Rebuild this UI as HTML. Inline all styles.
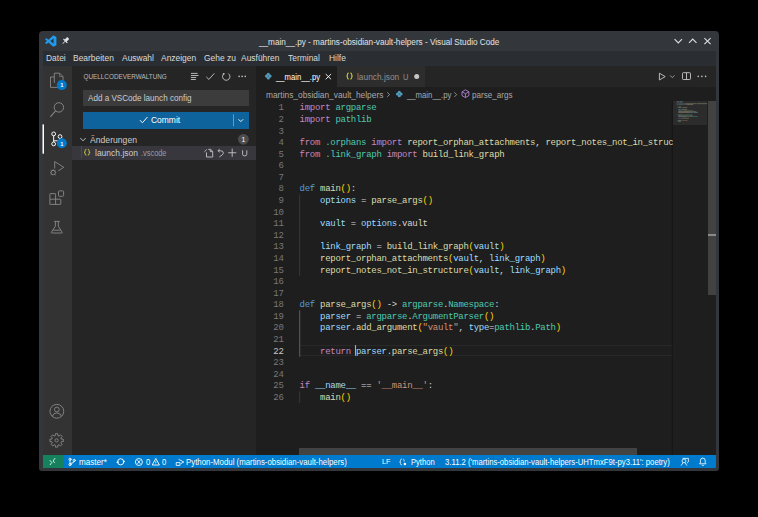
<!DOCTYPE html>
<html><head><meta charset="utf-8">
<style>
*{box-sizing:border-box;margin:0;padding:0}
html,body{width:758px;height:517px;background:#000;overflow:hidden;font-family:"Liberation Sans",sans-serif}
.a{position:absolute;white-space:pre}
.bx{position:absolute}
.mi{position:absolute;top:51px;height:14px;line-height:14px;font-size:8.45px;color:#dadada;white-space:pre}
.ln{position:absolute;left:262px;width:21.6px;text-align:right;color:#787878;font-family:"Liberation Mono",monospace;font-size:9px;letter-spacing:-0.28px;line-height:11.58px;height:11.58px;white-space:pre}
.ln.cur{color:#c6c6c6}
.cl{position:absolute;left:299.6px;color:#d4d4d4;font-family:"Liberation Mono",monospace;font-size:9px;letter-spacing:-0.28px;line-height:11.58px;height:11.58px;white-space:pre}
.k{color:#c586c0}.d{color:#569cd6}.t{color:#4ec9b0}.f{color:#dcdcaa}.v{color:#9cdcfe}.b{color:#ffd700}.s{color:#ce9178}.g{color:#d4d4d4}
.tx{position:absolute;white-space:pre;line-height:12px;height:12px;transform-origin:0 0}
.sb{position:absolute;top:456.1px;height:12.6px;line-height:12.6px;font-size:7.7px;color:#fff;white-space:pre}
</style></head><body>
<!-- window frame -->
<div class="bx" style="left:39px;top:31px;width:680px;height:439.5px;background:#33373c;border-radius:4px 4px 3px 3px"></div>
<!-- menu bar -->
<div class="bx" style="left:42.5px;top:50.5px;width:673.5px;height:15.2px;background:#2a2e32"></div>
<!-- activity bar -->
<div class="bx" style="left:42.5px;top:65.7px;width:29.3px;height:389.3px;background:#333333"></div>
<!-- sidebar -->
<div class="bx" style="left:71.8px;top:65.7px;width:184.4px;height:389.3px;background:#252526"></div>
<!-- tab bar -->
<div class="bx" style="left:256.2px;top:65.7px;width:459.8px;height:20.9px;background:#252526"></div>
<div class="bx" style="left:256.2px;top:65.7px;width:80.6px;height:20.9px;background:#1e1e1e"></div>
<div class="bx" style="left:336.8px;top:65.7px;width:88px;height:20.9px;background:#2d2d2d"></div>
<!-- editor -->
<div class="bx" style="left:256.2px;top:86.6px;width:459.8px;height:368.4px;background:#1e1e1e"></div>
<!-- status bar -->
<div class="bx" style="left:42.5px;top:455px;width:673.5px;height:12.6px;background:#007acc"></div>
<div class="bx" style="left:42.5px;top:455px;width:20.5px;height:12.6px;background:#16825d"></div>

<!-- sidebar widgets -->
<div class="bx" style="left:83px;top:90.3px;width:166px;height:15.3px;background:#3c3c3c"></div>
<div class="bx" style="left:83px;top:112px;width:166px;height:16.6px;background:#0e639c"></div>
<div class="bx" style="left:71.8px;top:146px;width:184.4px;height:13.6px;background:#37373d"></div>

<!-- current line highlight -->
<div class="bx" style="left:299.5px;top:344.8px;width:373px;height:11.2px;border-top:1px solid #282828;border-bottom:1px solid #282828"></div>

<!-- minimap slider & scrollbars -->
<div class="bx" style="left:672.8px;top:100.8px;width:34.7px;height:24.3px;background:#2c2c2c"></div>
<div class="bx" style="left:707.6px;top:100.8px;width:8.4px;height:194.3px;background:#424242"></div>
<div class="bx" style="left:707.6px;top:234.3px;width:8.4px;height:1.6px;background:#8a8a8a"></div>
<div class="bx" style="left:670.5px;top:100.8px;width:2.5px;height:354.2px;background:linear-gradient(to right,rgba(0,0,0,0),rgba(0,0,0,.35))"></div>
<div class="bx" style="left:299px;top:447.9px;width:337.6px;height:7.1px;background:#434343"></div>

<svg class="a" style="left:0;top:0" width="758" height="517" viewBox="0 0 758 517"><g opacity="0.42"><rect x="676.70" y="101.00" width="2.46" height="0.7" fill="#c586c0"/><rect x="679.57" y="101.00" width="3.28" height="0.7" fill="#4ec9b0"/><rect x="676.70" y="101.80" width="2.46" height="0.7" fill="#c586c0"/><rect x="679.57" y="101.80" width="2.87" height="0.7" fill="#4ec9b0"/><rect x="676.70" y="103.40" width="1.64" height="0.7" fill="#c586c0"/><rect x="678.75" y="103.40" width="3.28" height="0.7" fill="#4ec9b0"/><rect x="682.44" y="103.40" width="2.46" height="0.7" fill="#c586c0"/><rect x="685.31" y="103.40" width="10.25" height="0.7" fill="#dcdcaa"/><rect x="695.56" y="103.40" width="0.41" height="0.7" fill="#d4d4d4"/><rect x="696.38" y="103.40" width="10.92" height="0.7" fill="#dcdcaa"/><rect x="676.70" y="104.20" width="1.64" height="0.7" fill="#c586c0"/><rect x="678.75" y="104.20" width="4.51" height="0.7" fill="#4ec9b0"/><rect x="683.67" y="104.20" width="2.46" height="0.7" fill="#c586c0"/><rect x="686.54" y="104.20" width="6.56" height="0.7" fill="#dcdcaa"/><rect x="676.70" y="106.60" width="1.23" height="0.7" fill="#569cd6"/><rect x="678.34" y="106.60" width="1.64" height="0.7" fill="#dcdcaa"/><rect x="679.98" y="106.60" width="0.82" height="0.7" fill="#ffd700"/><rect x="680.80" y="106.60" width="0.41" height="0.7" fill="#d4d4d4"/><rect x="678.34" y="107.40" width="2.87" height="0.7" fill="#9cdcfe"/><rect x="681.62" y="107.40" width="0.41" height="0.7" fill="#d4d4d4"/><rect x="682.44" y="107.40" width="4.10" height="0.7" fill="#dcdcaa"/><rect x="686.54" y="107.40" width="0.82" height="0.7" fill="#ffd700"/><rect x="678.34" y="109.00" width="2.05" height="0.7" fill="#9cdcfe"/><rect x="680.80" y="109.00" width="0.41" height="0.7" fill="#d4d4d4"/><rect x="681.62" y="109.00" width="2.87" height="0.7" fill="#9cdcfe"/><rect x="684.49" y="109.00" width="0.41" height="0.7" fill="#d4d4d4"/><rect x="684.90" y="109.00" width="2.05" height="0.7" fill="#d4d4d4"/><rect x="678.34" y="110.60" width="4.10" height="0.7" fill="#9cdcfe"/><rect x="682.85" y="110.60" width="0.41" height="0.7" fill="#d4d4d4"/><rect x="683.67" y="110.60" width="6.56" height="0.7" fill="#dcdcaa"/><rect x="690.23" y="110.60" width="0.41" height="0.7" fill="#ffd700"/><rect x="690.64" y="110.60" width="2.05" height="0.7" fill="#9cdcfe"/><rect x="692.69" y="110.60" width="0.41" height="0.7" fill="#ffd700"/><rect x="678.34" y="111.40" width="10.25" height="0.7" fill="#dcdcaa"/><rect x="688.59" y="111.40" width="0.41" height="0.7" fill="#ffd700"/><rect x="689.00" y="111.40" width="2.05" height="0.7" fill="#9cdcfe"/><rect x="691.05" y="111.40" width="0.41" height="0.7" fill="#d4d4d4"/><rect x="691.87" y="111.40" width="4.10" height="0.7" fill="#9cdcfe"/><rect x="695.97" y="111.40" width="0.41" height="0.7" fill="#ffd700"/><rect x="678.34" y="112.20" width="11.89" height="0.7" fill="#dcdcaa"/><rect x="690.23" y="112.20" width="0.41" height="0.7" fill="#ffd700"/><rect x="690.64" y="112.20" width="2.05" height="0.7" fill="#9cdcfe"/><rect x="692.69" y="112.20" width="0.41" height="0.7" fill="#d4d4d4"/><rect x="693.51" y="112.20" width="4.10" height="0.7" fill="#9cdcfe"/><rect x="697.61" y="112.20" width="0.41" height="0.7" fill="#ffd700"/><rect x="676.70" y="114.60" width="1.23" height="0.7" fill="#569cd6"/><rect x="678.34" y="114.60" width="4.10" height="0.7" fill="#dcdcaa"/><rect x="682.44" y="114.60" width="0.82" height="0.7" fill="#ffd700"/><rect x="683.67" y="114.60" width="0.82" height="0.7" fill="#d4d4d4"/><rect x="684.90" y="114.60" width="3.28" height="0.7" fill="#4ec9b0"/><rect x="688.18" y="114.60" width="0.41" height="0.7" fill="#d4d4d4"/><rect x="688.59" y="114.60" width="3.69" height="0.7" fill="#4ec9b0"/><rect x="692.28" y="114.60" width="0.41" height="0.7" fill="#d4d4d4"/><rect x="678.34" y="115.40" width="2.46" height="0.7" fill="#9cdcfe"/><rect x="681.21" y="115.40" width="0.41" height="0.7" fill="#d4d4d4"/><rect x="682.03" y="115.40" width="3.28" height="0.7" fill="#4ec9b0"/><rect x="685.31" y="115.40" width="0.41" height="0.7" fill="#d4d4d4"/><rect x="685.72" y="115.40" width="5.74" height="0.7" fill="#4ec9b0"/><rect x="691.46" y="115.40" width="0.82" height="0.7" fill="#ffd700"/><rect x="678.34" y="116.20" width="2.46" height="0.7" fill="#9cdcfe"/><rect x="680.80" y="116.20" width="0.41" height="0.7" fill="#d4d4d4"/><rect x="681.21" y="116.20" width="4.92" height="0.7" fill="#dcdcaa"/><rect x="686.13" y="116.20" width="0.41" height="0.7" fill="#ffd700"/><rect x="686.54" y="116.20" width="2.87" height="0.7" fill="#ce9178"/><rect x="689.41" y="116.20" width="0.41" height="0.7" fill="#d4d4d4"/><rect x="690.23" y="116.20" width="1.64" height="0.7" fill="#9cdcfe"/><rect x="691.87" y="116.20" width="0.41" height="0.7" fill="#d4d4d4"/><rect x="692.28" y="116.20" width="2.87" height="0.7" fill="#4ec9b0"/><rect x="695.15" y="116.20" width="0.41" height="0.7" fill="#d4d4d4"/><rect x="695.56" y="116.20" width="1.64" height="0.7" fill="#4ec9b0"/><rect x="697.20" y="116.20" width="0.41" height="0.7" fill="#ffd700"/><rect x="678.34" y="117.80" width="2.46" height="0.7" fill="#c586c0"/><rect x="681.21" y="117.80" width="2.46" height="0.7" fill="#9cdcfe"/><rect x="683.67" y="117.80" width="0.41" height="0.7" fill="#d4d4d4"/><rect x="684.08" y="117.80" width="4.10" height="0.7" fill="#dcdcaa"/><rect x="688.18" y="117.80" width="0.82" height="0.7" fill="#ffd700"/><rect x="676.70" y="120.20" width="0.82" height="0.7" fill="#c586c0"/><rect x="677.93" y="120.20" width="3.28" height="0.7" fill="#9cdcfe"/><rect x="681.62" y="120.20" width="0.82" height="0.7" fill="#d4d4d4"/><rect x="682.85" y="120.20" width="4.10" height="0.7" fill="#ce9178"/><rect x="686.95" y="120.20" width="0.41" height="0.7" fill="#d4d4d4"/><rect x="678.34" y="121.00" width="1.64" height="0.7" fill="#dcdcaa"/><rect x="679.98" y="121.00" width="0.82" height="0.7" fill="#ffd700"/></g></svg>

<div class="bx" style="left:0;top:0;width:672.5px;height:517px;overflow:hidden">
<div class="ln" style="top:103.40px">1</div>
<div class="cl" style="top:103.40px"><span class="k">import</span> <span class="t">argparse</span></div>
<div class="ln" style="top:114.98px">2</div>
<div class="cl" style="top:114.98px"><span class="k">import</span> <span class="t">pathlib</span></div>
<div class="ln" style="top:126.56px">3</div>
<div class="ln" style="top:138.14px">4</div>
<div class="cl" style="top:138.14px"><span class="k">from</span> <span class="t">.orphans</span> <span class="k">import</span> <span class="f">report_orphan_attachments</span>, <span class="f">report_notes_not_in_structure</span></div>
<div class="ln" style="top:149.72px">5</div>
<div class="cl" style="top:149.72px"><span class="k">from</span> <span class="t">.link_graph</span> <span class="k">import</span> <span class="f">build_link_graph</span></div>
<div class="ln" style="top:161.30px">6</div>
<div class="ln" style="top:172.88px">7</div>
<div class="ln" style="top:184.46px">8</div>
<div class="cl" style="top:184.46px"><span class="d">def</span> <span class="f">main</span><span class="b">()</span>:</div>
<div class="ln" style="top:196.04px">9</div>
<div class="cl" style="top:196.04px">    <span class="v">options</span> = <span class="f">parse_args</span><span class="b">()</span></div>
<div class="ln" style="top:207.62px">10</div>
<div class="ln" style="top:219.20px">11</div>
<div class="cl" style="top:219.20px">    <span class="v">vault</span> = <span class="v">options</span>.<span class="g">vault</span></div>
<div class="ln" style="top:230.78px">12</div>
<div class="ln" style="top:242.36px">13</div>
<div class="cl" style="top:242.36px">    <span class="v">link_graph</span> = <span class="f">build_link_graph</span><span class="b">(</span><span class="v">vault</span><span class="b">)</span></div>
<div class="ln" style="top:253.94px">14</div>
<div class="cl" style="top:253.94px">    <span class="f">report_orphan_attachments</span><span class="b">(</span><span class="v">vault</span>, <span class="v">link_graph</span><span class="b">)</span></div>
<div class="ln" style="top:265.52px">15</div>
<div class="cl" style="top:265.52px">    <span class="f">report_notes_not_in_structure</span><span class="b">(</span><span class="v">vault</span>, <span class="v">link_graph</span><span class="b">)</span></div>
<div class="ln" style="top:277.10px">16</div>
<div class="ln" style="top:288.68px">17</div>
<div class="ln" style="top:300.26px">18</div>
<div class="cl" style="top:300.26px"><span class="d">def</span> <span class="f">parse_args</span><span class="b">()</span> -&gt; <span class="t">argparse</span>.<span class="t">Namespace</span>:</div>
<div class="ln" style="top:311.84px">19</div>
<div class="cl" style="top:311.84px">    <span class="v">parser</span> = <span class="t">argparse</span>.<span class="t">ArgumentParser</span><span class="b">()</span></div>
<div class="ln" style="top:323.42px">20</div>
<div class="cl" style="top:323.42px">    <span class="v">parser</span>.<span class="f">add_argument</span><span class="b">(</span><span class="s">"vault"</span>, <span class="v">type</span>=<span class="t">pathlib</span>.<span class="t">Path</span><span class="b">)</span></div>
<div class="ln" style="top:335.00px">21</div>
<div class="ln cur" style="top:346.58px">22</div>
<div class="cl" style="top:346.58px">    <span class="k">return</span> <span class="v">parser</span>.<span class="f">parse_args</span><span class="b">()</span></div>
<div class="ln" style="top:358.16px">23</div>
<div class="ln" style="top:369.74px">24</div>
<div class="ln" style="top:381.32px">25</div>
<div class="cl" style="top:381.32px"><span class="k">if</span> <span class="v">__name__</span> == <span class="s">'__main__'</span>:</div>
<div class="ln" style="top:392.90px">26</div>
<div class="cl" style="top:392.90px">    <span class="f">main</span><span class="b">()</span></div>
</div>

<!-- title -->

<!-- menu -->

<!-- sidebar texts -->

<!-- tabs texts -->

<!-- breadcrumbs -->

<!-- status bar texts -->

<div class="tx" style="left:258.6px;top:36.29px;font-size:8.69px;color:#e3e3e3;transform:scaleX(0.9434)">__main__.py - martins-obsidian-vault-helpers - Visual Studio Code</div>
<div class="tx" style="left:46.2px;top:51.65px;font-size:9.46px;color:#dadada;transform:scaleX(0.8929)">Datei</div>
<div class="tx" style="left:73.3px;top:51.65px;font-size:9.46px;color:#dadada;transform:scaleX(0.8929)">Bearbeiten</div>
<div class="tx" style="left:121.6px;top:51.65px;font-size:9.46px;color:#dadada;transform:scaleX(0.8929)">Auswahl</div>
<div class="tx" style="left:161px;top:51.65px;font-size:9.46px;color:#dadada;transform:scaleX(0.8929)">Anzeigen</div>
<div class="tx" style="left:203.6px;top:51.65px;font-size:9.46px;color:#dadada;transform:scaleX(0.8929)">Gehe zu</div>
<div class="tx" style="left:241px;top:51.65px;font-size:9.46px;color:#dadada;transform:scaleX(0.8929)">Ausführen</div>
<div class="tx" style="left:288px;top:51.65px;font-size:9.46px;color:#dadada;transform:scaleX(0.8929)">Terminal</div>
<div class="tx" style="left:328.6px;top:51.65px;font-size:9.46px;color:#dadada;transform:scaleX(0.8929)">Hilfe</div>
<div class="tx" style="left:83.5px;top:71.20px;font-size:6.36px;color:#bbbbbb;transform:scaleX(1.0000)">QUELLCODEVERWALTUNG</div>
<div class="tx" style="left:87.6px;top:91.56px;font-size:9.07px;color:#cccccc;transform:scaleX(0.8929)">Add a VSCode launch config</div>
<div class="tx" style="left:150.7px;top:113.82px;font-size:9.48px;color:#ffffff;transform:scaleX(0.8929)">Commit</div>
<div class="tx" style="left:89.9px;top:133.95px;font-size:9.67px;color:#cccccc;transform:scaleX(0.8929)">Änderungen</div>
<div class="tx" style="left:94.5px;top:147.30px;font-size:9.52px;color:#cccccc;transform:scaleX(0.8929)">launch.json</div>
<div class="tx" style="left:141.3px;top:146.79px;font-size:8.29px;color:#9d9d9d;transform:scaleX(0.8929)">.vscode</div>
<div class="tx" style="left:276px;top:70.91px;font-size:8.62px;color:#ffffff;transform:scaleX(0.8929)">__main__.py</div>
<div class="tx" style="left:357.1px;top:70.66px;font-size:9.35px;color:#8f8f8f;transform:scaleX(0.8929)">launch.json</div>
<div class="tx" style="left:402.6px;top:70.99px;font-size:8.40px;color:#8f8f8f;transform:scaleX(0.8929)">U</div>
<div class="tx" style="left:266px;top:88.66px;font-size:9.35px;color:#a9a9a9;transform:scaleX(0.8929)">martins_obsidian_vault_helpers</div>
<div class="tx" style="left:407.0px;top:88.89px;font-size:8.68px;color:#a9a9a9;transform:scaleX(0.8929)">__main__.py</div>
<div class="tx" style="left:472.3px;top:88.76px;font-size:9.07px;color:#a9a9a9;transform:scaleX(0.8929)">parse_args</div>
<div class="tx" style="left:79px;top:455.96px;font-size:9.07px;color:#ffffff;transform:scaleX(0.8929)">master*</div>
<div class="tx" style="left:145.6px;top:456.11px;font-size:8.62px;color:#ffffff;transform:scaleX(0.8929)">0</div>
<div class="tx" style="left:162px;top:456.11px;font-size:8.62px;color:#ffffff;transform:scaleX(0.8929)">0</div>
<div class="tx" style="left:186.3px;top:456.05px;font-size:8.79px;color:#ffffff;transform:scaleX(0.8929)">Python-Modul (martins-obsidian-vault-helpers)</div>
<div class="tx" style="left:382.2px;top:456.34px;font-size:7.95px;color:#ffffff;transform:scaleX(0.8929)">LF</div>
<div class="tx" style="left:411px;top:456.15px;font-size:8.51px;color:#ffffff;transform:scaleX(0.8929)">Python</div>
<div class="tx" style="left:444.7px;top:456.10px;font-size:8.65px;color:#ffffff;transform:scaleX(0.8929)">3.11.2 (&#x27;martins-obsidian-vault-helpers-UHTmxF9t-py3.11&#x27;: poetry)</div>
<!-- icons -->
<svg class="a" style="left:0;top:0" width="758" height="517" viewBox="0 0 758 517" fill="none">

<!-- vscode logo -->
<g transform="translate(45.2,35.5) scale(0.112)"><path fill="#1f9cf0" fill-rule="evenodd" d="M96.46 10.8L75.86.87C73.48-.28 70.62.2 68.75 2.07L29.3 38.04 12.12 25c-1.6-1.21-3.84-1.11-5.32.24L1.29 30.25c-1.81 1.65-1.81 4.51 0 6.16L16.19 50 1.29 63.59c-1.81 1.65-1.81 4.51 0 6.16l5.51 5.01c1.48 1.35 3.72 1.45 5.32.24l17.18-13.04 39.45 35.97c1.87 1.87 4.73 2.35 7.11 1.2l20.6-9.93A6.25 6.25 0 00100 83.57V16.43a6.25 6.25 0 00-3.54-5.63zM75.02 27.3L45.11 50l29.91 22.7V27.3z"/></g>
<!-- pin -->
<g transform="translate(65.5,40.8) rotate(45)" fill="#e6e6e6"><rect x="-1.4" y="-3.8" width="2.8" height="3.6"/><rect x="-2.7" y="-0.4" width="5.4" height="1.1"/><rect x="-0.35" y="0.6" width="0.7" height="3.4"/></g>
<!-- window controls -->
<polyline points="674.6,39.2 678.3,43 682,39.2" stroke="#dedede" stroke-width="1.1"/>
<polyline points="689,42.9 692.75,39.1 696.5,42.9" stroke="#dedede" stroke-width="1.1"/>
<path d="M704.4,38.2 L710.6,44.1 M710.6,38.2 L704.4,44.1" stroke="#dedede" stroke-width="1.1"/>

<!-- activity: explorer -->
<g stroke="#858585" stroke-width="0.95">
<path d="M54.3,77 H50.5 V87.4 H58"/>
<path d="M54.3,83 V73.2 H59.6 L63,76.6 V80"/>
<path d="M59.6,73.2 V76.6 H63" stroke-width="0.7"/>
</g>
<circle cx="61.8" cy="85.1" r="5" fill="#007acc"/><text x="61.8" y="87.4" text-anchor="middle" font-family="Liberation Sans" font-weight="bold" font-size="5.8" fill="#fff">1</text>
<!-- search -->
<circle cx="58.9" cy="107.4" r="4.7" stroke="#858585" stroke-width="1"/>
<path d="M55.6,110.8 L50.3,116.8" stroke="#858585" stroke-width="1.1"/>
<!-- scm active -->
<rect x="42.5" y="124.4" width="1.5" height="29.3" fill="#ffffff"/>
<g stroke="#ffffff" stroke-width="0.95">
<circle cx="53.66" cy="133.9" r="1.9"/><circle cx="60.04" cy="136.6" r="1.9"/><circle cx="53.66" cy="143.9" r="1.9"/>
<path d="M53.66,135.8 V142 M53.66,140.8 H57.6 Q60.04,140.8 60.04,138.5"/>
</g>
<circle cx="61.8" cy="143.2" r="5" fill="#007acc"/><text x="61.8" y="145.5" text-anchor="middle" font-family="Liberation Sans" font-weight="bold" font-size="5.8" fill="#fff">1</text>
<!-- run debug -->
<g stroke="#858585" stroke-width="0.95">
<path d="M54.7,168.5 V161.6 L63.8,167.3 L58.3,170.8"/>
<circle cx="53.2" cy="172.6" r="2.2"/>
<path d="M50.2,172.6 H51 M55.4,172.6 H56.2 M50.8,170.2 L51.6,170.9 M55.6,170.2 L54.8,170.9 M50.8,175 L51.6,174.3 M55.6,175 L54.8,174.3 M51.8,170.6 Q53.2,169.2 54.6,170.6"/>
</g>
<!-- extensions -->
<g stroke="#858585" stroke-width="0.95">
<rect x="58.5" y="190.9" width="5.1" height="5.4" rx="0.8"/>
<path d="M49.9,204.4 V194.1 Q49.9,193.6 50.4,193.6 H55.1 Q55.6,193.6 55.6,194.1 V204.4 M49.9,199.2 H60.3 Q60.8,199.2 60.8,199.7 V203.9 Q60.8,204.4 60.3,204.4 H50.4 Q49.9,204.4 49.9,203.9"/>
</g>
<!-- testing flask -->
<g stroke="#858585" stroke-width="0.95" stroke-linejoin="round">
<path d="M54.1,221.4 H59.8 M55.4,221.4 V226.2 L51.3,232.4 Q51.1,233 51.8,233 H61.8 Q62.5,233 62.2,232.4 L58.3,226.2 V221.4 M53.1,230.2 H60.5"/>
</g>
<!-- account -->
<g stroke="#858585" stroke-width="0.95">
<circle cx="56.85" cy="411.3" r="6.9"/>
<circle cx="56.85" cy="409.5" r="2.4"/>
<path d="M52.3,416.3 Q53,413 56.85,412.9 Q60.7,413 61.4,416.3"/>
</g>
<!-- settings -->
<g stroke="#858585" stroke-width="0.95" stroke-linejoin="round">
<path d="M55.31,435.67 L55.43,433.70 L57.77,433.70 L57.89,435.67 L59.03,436.14 L60.51,434.84 L62.16,436.49 L60.86,437.97 L61.33,439.11 L63.30,439.23 L63.30,441.57 L61.33,441.69 L60.86,442.83 L62.16,444.31 L60.51,445.96 L59.03,444.66 L57.89,445.13 L57.77,447.10 L55.43,447.10 L55.31,445.13 L54.17,444.66 L52.69,445.96 L51.04,444.31 L52.34,442.83 L51.87,441.69 L49.90,441.57 L49.90,439.23 L51.87,439.11 L52.34,437.97 L51.04,436.49 L52.69,434.84 L54.17,436.14 Z"/>
<circle cx="56.6" cy="440.4" r="1.6"/>
</g>

<!-- sidebar header icons -->
<g stroke="#c5c5c5" stroke-width="0.9">
<path d="M190.9,73.4 H197.6 M190.9,75.5 H198.5 M190.9,77.5 H196.2 M190.9,79.5 H195.8"/>
<polyline points="206.3,76.9 208.9,79.4 214.3,73.4"/>
<path d="M223.9,73.7 A3.7,3.7 0 1 0 228.3,73.5"/>
</g>
<circle cx="223.7" cy="73.8" r="0.9" fill="#c5c5c5"/>
<g fill="#c5c5c5"><circle cx="239.1" cy="76.4" r="0.78"/><circle cx="242.15" cy="76.4" r="0.78"/><circle cx="245.2" cy="76.4" r="0.78"/></g>

<!-- commit button -->
<polyline points="140,120.2 142.4,122.8 147.4,117" stroke="#ffffff" stroke-width="0.95"/>
<path d="M233.5,114.4 V126.3" stroke="rgba(255,255,255,0.45)" stroke-width="0.8"/>
<polyline points="238.5,119.3 240.8,121.6 243.1,119.3" stroke="#ffffff" stroke-width="0.9"/>

<!-- Änderungen chevron + badge -->
<polyline points="80.3,138 83,140.9 85.7,138" stroke="#c5c5c5" stroke-width="0.9"/>
<circle cx="243.4" cy="139.3" r="5.4" fill="#4d4d4d"/><text x="243.4" y="141.7" text-anchor="middle" font-family="Liberation Sans" font-size="6.8" fill="#fff">1</text>


<!-- launch.json row -->
<path d="M81.4,146 V158.7" stroke="#585858" stroke-width="0.6"/>
<g stroke="#c5c5c5" stroke-width="0.9" stroke-linejoin="round">
<path d="M208.3,149.4 H210.6 L212.7,151.4 V157 H206.5 V152.4 M204.4,151.8 L206.8,149.5 M210.3,149.6 V151.6 H212.5" />
<path d="M217.9,150.7 L219.6,149.2 M217.9,150.7 L219.8,152.2 M218.2,150.7 H220.6 Q223.6,150.9 223.4,153.2 Q223.2,154.6 219.4,156.9"/>
<path d="M232.2,148.6 V156.9 M228.2,152.75 H236.3"/>
<path d="M242.6,150.3 V154.3 Q242.6,155.9 244.7,155.9 Q246.8,155.9 246.8,154.3 V150.3"/>
</g>

<!-- tab icons -->
<g fill="#519aba"><circle cx="268.3" cy="74.3" r="1.55"/><circle cx="270.1" cy="76.1" r="1.55"/><circle cx="268.3" cy="77.9" r="1.55"/><circle cx="266.5" cy="76.1" r="1.55"/></g>
<path d="M325.7,74 L331.1,79.3 M331.1,74 L325.7,79.3" stroke="#ffffff" stroke-width="0.9"/>
<g id="br" stroke="#c8c83e" stroke-width="1.05" fill="none">
<path d="M348.8,72.9 Q347.4,72.9 347.4,74.2 V75.2 Q347.4,76 346.3,76 Q347.4,76 347.4,76.8 V77.8 Q347.4,79.1 348.8,79.1 M350.3,72.9 Q351.7,72.9 351.7,74.2 V75.2 Q351.7,76 352.8,76 Q351.7,76 351.7,76.8 V77.8 Q351.7,79.1 350.3,79.1"/>
</g>
<g transform="translate(83.9,149.2) scale(0.93) translate(-346.1,-72.7)" stroke="#c8c83e" stroke-width="1.05" fill="none">
<path d="M348.8,72.9 Q347.4,72.9 347.4,74.2 V75.2 Q347.4,76 346.3,76 Q347.4,76 347.4,76.8 V77.8 Q347.4,79.1 348.8,79.1 M350.3,72.9 Q351.7,72.9 351.7,74.2 V75.2 Q351.7,76 352.8,76 Q351.7,76 351.7,76.8 V77.8 Q351.7,79.1 350.3,79.1"/>
</g>
<circle cx="416.7" cy="76.5" r="2.5" fill="#c5c5c5"/>
<!-- editor actions -->
<g stroke="#c5c5c5" stroke-width="0.9" stroke-linejoin="round">
<path d="M659.4,73.2 V80 L665.2,76.6 Z"/>
<polyline points="670.1,75.4 672.3,77.6 674.5,75.4" stroke-width="0.7"/>
<rect x="682.5" y="72.7" width="8" height="6.8" rx="0.8"/>
<path d="M686.5,72.7 V79.5"/>
</g>
<g fill="#c5c5c5"><circle cx="698.2" cy="76.4" r="0.78"/><circle cx="701.9" cy="76.4" r="0.78"/><circle cx="705.6" cy="76.4" r="0.78"/></g>

<!-- breadcrumbs icons -->
<g stroke="#a9a9a9" stroke-width="0.8"><polyline points="387.2,92.3 389.5,94.6 387.2,96.9"/><polyline points="454.4,92.3 456.7,94.6 454.4,96.9"/></g>
<g fill="#519aba"><circle cx="399.3" cy="92.2" r="1.55"/><circle cx="401.1" cy="94" r="1.55"/><circle cx="399.3" cy="95.8" r="1.55"/><circle cx="397.5" cy="94" r="1.55"/></g>
<g stroke="#b180d7" stroke-width="0.9" stroke-linejoin="round">
<path d="M465.45,89.8 L468.9,91.8 V95.6 L465.45,97.6 L462,95.6 V91.8 Z M462,91.8 L465.45,93.7 L468.9,91.8 M465.45,93.7 V97.6"/>
</g>

<!-- indent guides -->
<path d="M299.7,194.54 V275.60" stroke="#404040" stroke-width="0.8"/>
<path d="M299.7,310.34 V356.66" stroke="#707070" stroke-width="0.8"/>
<path d="M299.7,391.40 V402.98" stroke="#404040" stroke-width="0.8"/>
<!-- cursor -->
<rect x="354.95" y="345.1" width="1.1" height="10.7" fill="#aeafad"/>

<!-- status bar icons -->
<g stroke="#ffffff" stroke-width="0.9" stroke-linecap="round" stroke-linejoin="round">
<path d="M50,460.5 L51.8,462.4 L50.2,464.7 M54.9,458.4 L53,461.1 L54.6,462.6" stroke="#d8efe4" stroke-width="0.95"/>
<circle cx="70" cy="459.3" r="1.1"/><circle cx="70" cy="464.6" r="1.1"/><circle cx="74.2" cy="460.4" r="1.1"/>
<path d="M70,460.4 V463.5 M74.2,461.5 Q74.2,463 70.5,463.6"/>
<circle cx="120.7" cy="461.8" r="3.1"/>
</g>
<path d="M116.2,462.6 L118.3,460.6 L118.6,463.2 Z M125.2,461 L123.1,463 L122.8,460.4 Z" fill="#ffffff"/>
<g stroke="#ffffff" stroke-width="0.9" stroke-linejoin="round">
<circle cx="138.9" cy="462" r="3.5"/>
<path d="M137.4,460.2 L140.4,463.8 M140.4,460.2 L137.4,463.8" stroke-width="0.85"/>
<path d="M155.8,458.5 L159.4,465 H152.2 Z"/>
<path d="M155.8,460.9 V463 M155.8,463.6 V464.1" stroke-width="0.7"/>
<path d="M176.2,462.6 H180 V465.4 H176.2 Z M178.6,459.3 L183.8,462 L180.8,463.6" stroke-width="0.85"/>
<path d="M401.9,459 Q400.5,459 400.5,460.4 V461.2 Q400.5,462 399.6,462 Q400.5,462 400.5,462.8 V463.5 Q400.5,464.9 401.9,464.9" stroke-width="0.75"/>
<path d="M403.2,459.1 Q404.1,459.2 404.1,460.3 V461.6" stroke-width="0.75"/>
<circle cx="404.9" cy="464" r="1.25" fill="#ffffff" stroke="none"/>
<path d="M681,465.6 L683,462.8 M687,465.6 L685,462.8 M684,462.8 A1.9,1.9 0 1 0 684,459 A1.9,1.9 0 1 0 684,462.8 M682.6,458.4 H688.4 V461.8 L686.8,463.3" stroke-width="0.8"/>
<path d="M699.6,463.8 H706 L705.2,462.5 V460.6 Q705.2,458.1 702.8,458.1 Q700.4,458.1 700.4,460.6 V462.5 Z M701.8,465.2 Q702.8,466 703.8,465.2" stroke-width="0.85"/>
</g>

</svg>
</body></html>
